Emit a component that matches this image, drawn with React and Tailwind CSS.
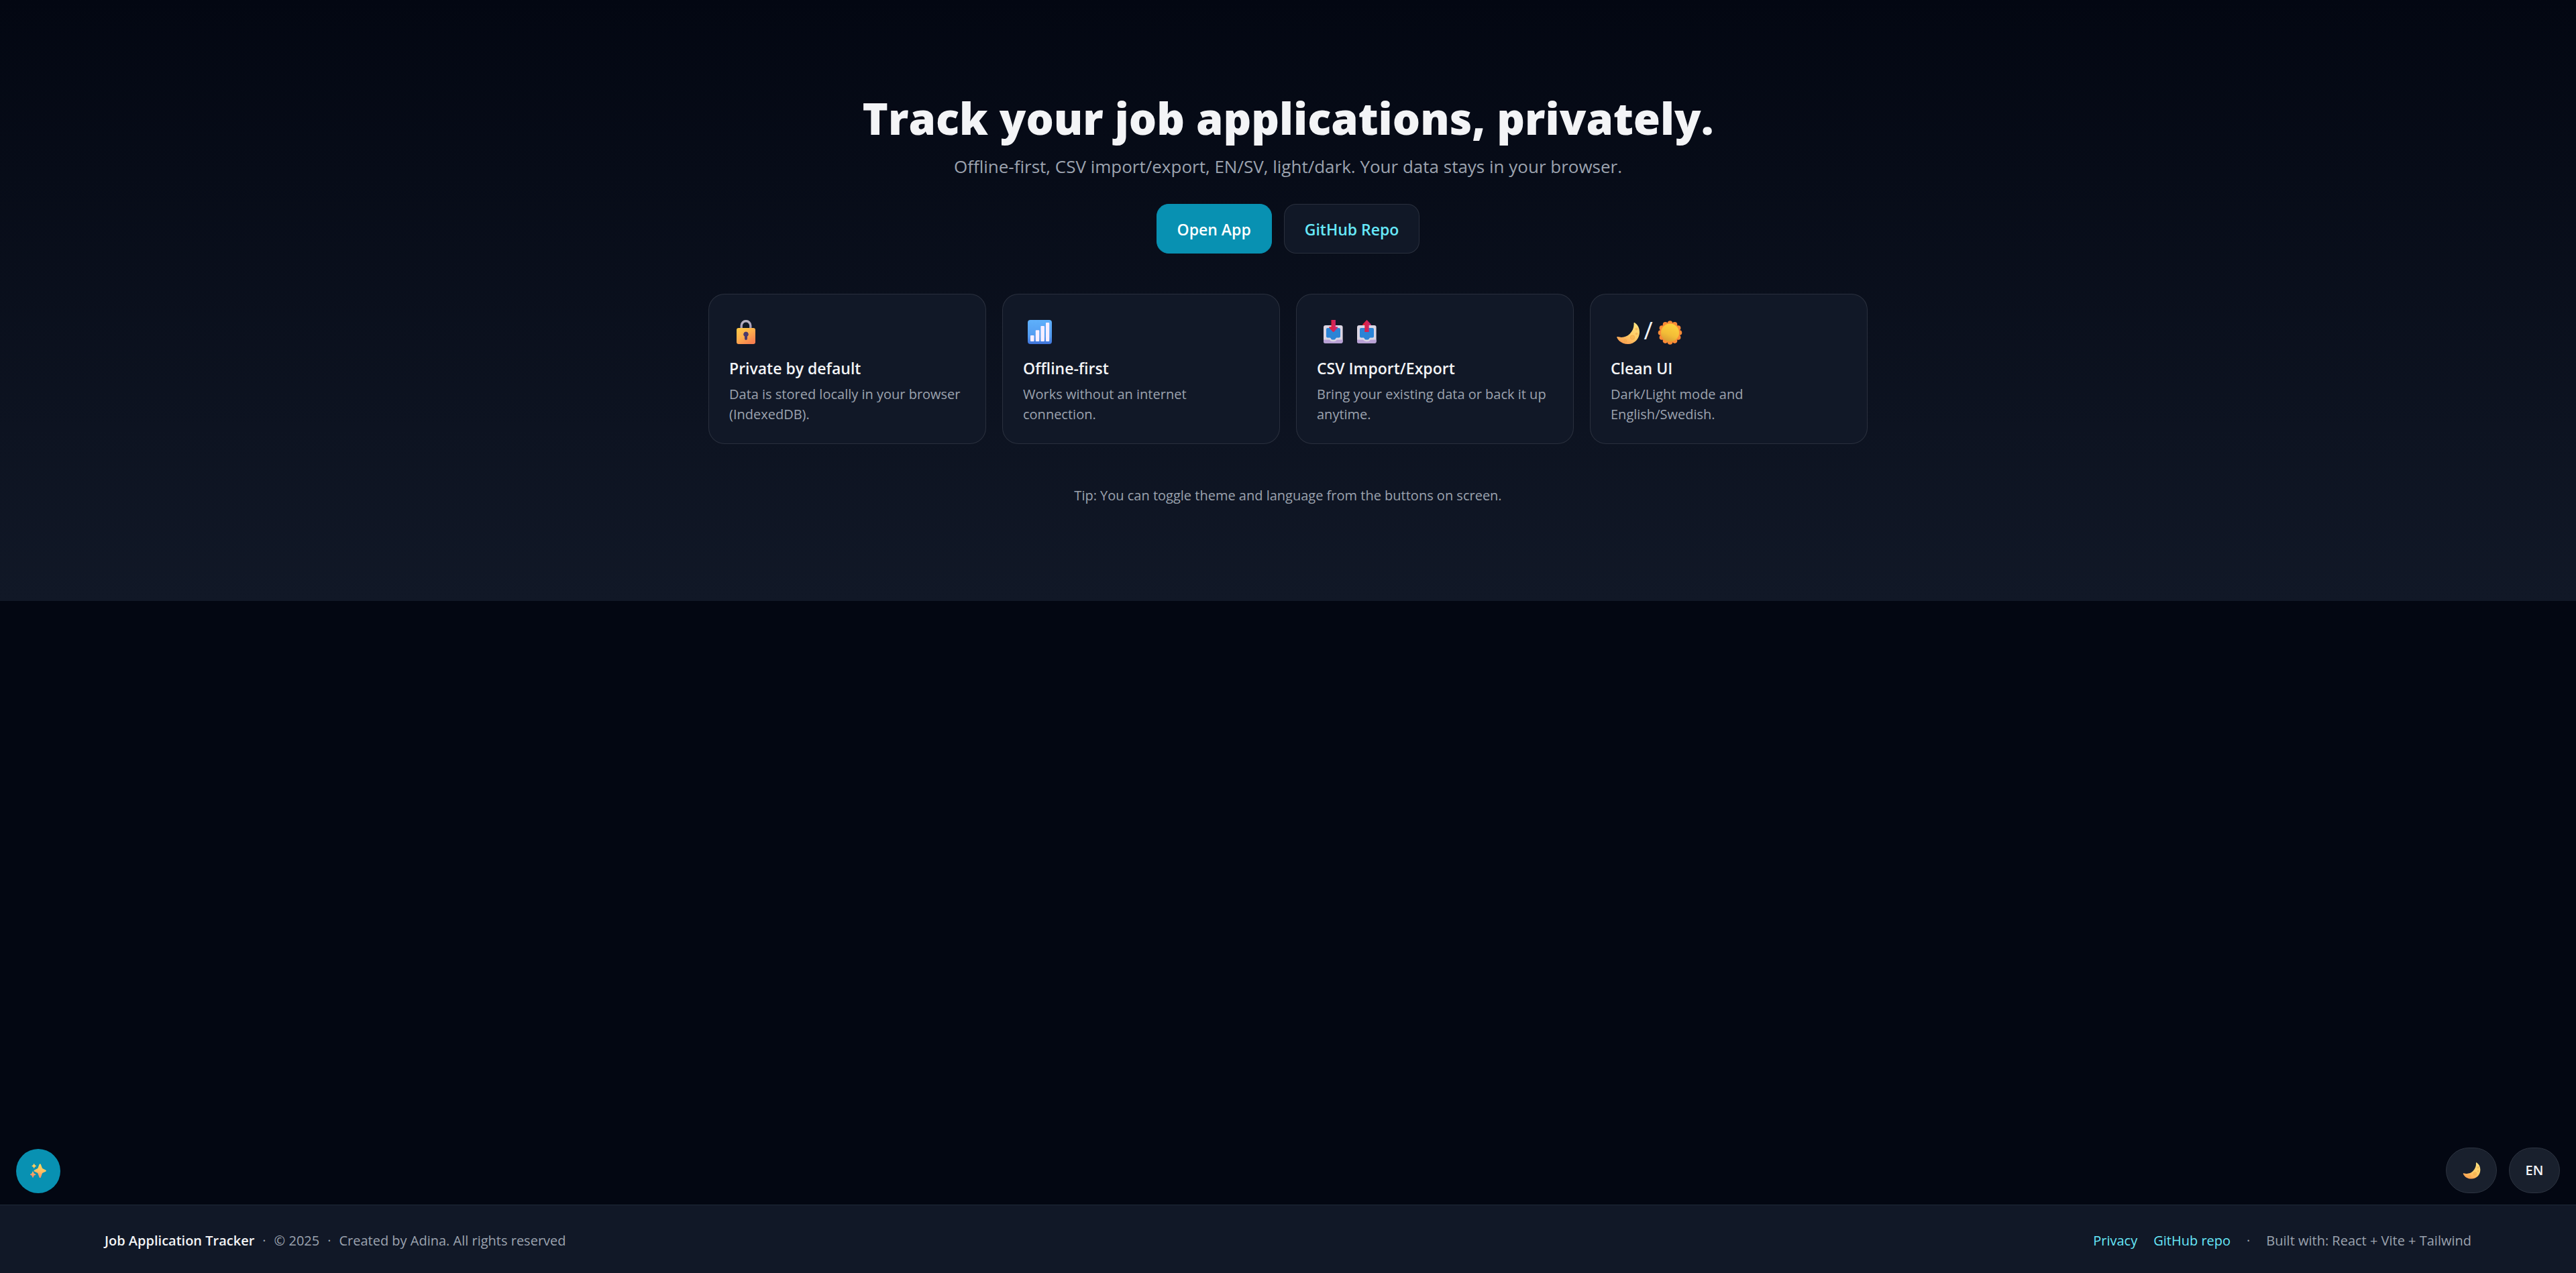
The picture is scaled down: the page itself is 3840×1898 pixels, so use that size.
import { useId } from 'react'

function LockIcon() {
  const id = useId()
  return (
    <svg className="size-12" viewBox="0 0 48 48" aria-hidden="true">
      <defs>
        <linearGradient id={id + 'b'} x1="0" y1="0" x2="0.7" y2="1">
          <stop offset="0" stopColor="#ffcb45" />
          <stop offset="0.5" stopColor="#ffb04d" />
          <stop offset="1" stopColor="#f8804f" />
        </linearGradient>
        <linearGradient id={id + 's'} x1="0" y1="0" x2="0" y2="1">
          <stop offset="0" stopColor="#b9b3c4" />
          <stop offset="1" stopColor="#9d8fb0" />
        </linearGradient>
      </defs>
      <path d="M18.2 22v-5.5a6.8 6.8 0 0 1 13.6 0V22" fill="none" stroke={`url(#${id}s)`} strokeWidth="3.4" />
      <rect x="11" y="20" width="28" height="24" rx="3" fill={`url(#${id}b)`} />
      <path d="M25 25.6a3.8 3.8 0 0 1 2 7V36a2 2 0 0 1-4 0v-3.4a3.8 3.8 0 0 1 2-7Z" fill="#4b3a6b" />
    </svg>
  )
}

function SignalIcon() {
  const id = useId()
  return (
    <svg className="size-12" viewBox="0 0 48 48" aria-hidden="true">
      <defs>
        <linearGradient id={id} x1="0" y1="0" x2="0" y2="1">
          <stop offset="0" stopColor="#5eb0fb" />
          <stop offset="0.7" stopColor="#529af0" />
          <stop offset="1" stopColor="#3f72d8" />
        </linearGradient>
      </defs>
      <rect x="7" y="8" width="36" height="36" rx="4" fill={`url(#${id})`} />
      <g fill="#f7eeff">
        <rect x="11" y="31" width="5.5" height="9" rx="1" />
        <rect x="18.8" y="23.3" width="5.5" height="16.7" rx="1" />
        <rect x="26.4" y="17" width="5.5" height="23" rx="1" />
        <rect x="34" y="12" width="5.2" height="28" rx="1" />
      </g>
    </svg>
  )
}

function TrayIcon({ arrow }) {
  const id = useId()
  return (
    <svg className="size-12" viewBox="0 0 48 48" aria-hidden="true">
      <defs>
        <linearGradient id={id} x1="0" y1="0" x2="1" y2="0">
          <stop offset="0" stopColor="#e61f2e" />
          <stop offset="1" stopColor="#c42a7c" />
        </linearGradient>
      </defs>
      <rect x="10" y="16" width="28.6" height="26.7" rx="3" fill="#dcd6e3" />
      <path d="M10 37.4h8.4c1.4 0 1.6 2.8 6 2.8s4.600-2.800 6-2.800h8.200v3.300a2 2 0 0 1-2 2H12a2 2 0 0 1-2-2Z" fill="#b9a1d6" />
      <path d="M16 20h17a2 2 0 0 1 2 2v10.500a2 2 0 0 1-2 2h-3.500c-1.600 0-1.400 3-3.500 3h-3c-2.100 0-1.900-3-3.500-3H16a2 2 0 0 1-2-2V22a2 2 0 0 1 2-2Z" fill="#2b84d6" />
      {arrow === 'down' ? (
        <path d="M21.500 8h6.400v10.300h2.400c1 0 1.300.8.7 1.500l-5.500 5.900c-.5.500-1.100.5-1.600 0l-5.500-5.900c-.6-.7-.3-1.500.7-1.500h2.400Z" fill={`url(#${id})`} />
      ) : (
        <path d="M21.300 26V15.900h-2.300c-.9 0-1.200-.8-.6-1.400l5.300-5.800c.5-.5 1.100-.5 1.600 0l5.300 5.800c.6.6.3 1.400-.6 1.400h-2.300V26Z" fill={`url(#${id})`} />
      )}
    </svg>
  )
}

function MoonIcon({ className, viewBox = '0 0 48 48' }) {
  const id = useId()
  return (
    <svg className={className} viewBox={viewBox} aria-hidden="true">
      <defs>
        <linearGradient id={id} x1="0.8" y1="0" x2="0.25" y2="1">
          <stop offset="0" stopColor="#ffe27e" />
          <stop offset="0.55" stopColor="#ffcb66" />
          <stop offset="1" stopColor="#ff9d50" />
        </linearGradient>
      </defs>
      <path
        d="M36 12.200C40.300 15 43 20 43 26c0 10.200-7.600 18-17.200 18-7.600 0-13.800-3.700-16.500-9.800-.3-.8.200-1.300 1-1.100 7.100 1.900 13.500.4 18.200-4.300 4.500-4.500 6.600-10.200 6-15.900-.1-.8.700-1.200 1.500-.7Z"
        fill={`url(#${id})`}
      />
      <g fill="#f5b04f" fillOpacity="0.65" stroke="#e89b45" strokeOpacity="0.5" strokeWidth="0.7">
        <circle cx="32.500" cy="34" r="3.300" />
        <circle cx="21.800" cy="39" r="2" />
        <circle cx="38.500" cy="21.500" r="1.600" />
        <circle cx="38.600" cy="28.600" r="1.300" />
      </g>
    </svg>
  )
}

function SunIcon() {
  const id = useId()
  const petals = Array.from({ length: 12 }, (_, i) => {
    const a = (i * Math.PI) / 6
    return [24.5 + 14 * Math.sin(a), 27 - 14 * Math.cos(a)]
  })
  return (
    <svg className="size-12" viewBox="0 0 48 48" aria-hidden="true">
      <defs>
        <linearGradient id={id} x1="0.7" y1="0" x2="0.3" y2="1">
          <stop offset="0" stopColor="#ffd43d" />
          <stop offset="0.6" stopColor="#f3bd37" />
          <stop offset="1" stopColor="#d79c35" />
        </linearGradient>
      </defs>
      <g fill="#fb8b35">
        <circle cx="24.500" cy="27" r="15" />
        {petals.map(([x, y]) => (
          <circle key={`${x}${y}`} cx={x} cy={y} r="3.800" />
        ))}
      </g>
      <circle cx="24.500" cy="27" r="13.500" fill={`url(#${id})`} />
    </svg>
  )
}

function SparklesIcon() {
  const id = useId()
  return (
    <svg className="h-[22px] w-6" viewBox="0 0 24 22" aria-hidden="true">
      <defs>
        <linearGradient id={id} gradientUnits="userSpaceOnUse" x1="14" y1="0" x2="10" y2="22">
          <stop offset="0" stopColor="#ffd85c" />
          <stop offset="0.5" stopColor="#ffc062" />
          <stop offset="1" stopColor="#fb8468" />
        </linearGradient>
      </defs>
      <g fill={`url(#${id})`}>
        <path d="M13.600.9c.4-1 1.800-1 2.200 0l1.900 5.200c.2.700.7 1.200 1.400 1.500l4 1.900c1 .4 1 1.800 0 2.200l-4 1.900c-.7.300-1.200.8-1.400 1.500l-1.900 5.400c-.4 1-1.800 1-2.200 0l-1.900-5.400c-.2-.7-.7-1.200-1.400-1.500l-4-1.900c-1-.4-1-1.800 0-2.200l4-1.900c.7-.3 1.200-.8 1.400-1.500Z" />
        <path d="M5.200.4c.2-.5.800-.5 1 0l.7 1.700 1.800.8c.5.200.5.900 0 1.100l-1.800.8-.7 1.700c-.2.500-.8.500-1 0l-.7-1.700-1.800-.8c-.5-.2-.5-.9 0-1.100l1.800-.8Z" />
        <path d="M3.400 12c.2-.6 1-.6 1.200 0l1 2.600 2.300 1c.6.200.6 1 0 1.200l-2.300 1-1 2.600c-.2.600-1 .6-1.200 0l-1-2.600-2.200-1c-.6-.2-.6-1 0-1.200l2.200-1Z" />
      </g>
    </svg>
  )
}

const features = [
  { title: 'Private by default', text: 'Data is stored locally in your browser (IndexedDB).', icon: <LockIcon /> },
  { title: 'Offline-first', text: 'Works without an internet connection.', icon: <SignalIcon /> },
  {
    title: 'CSV Import/Export',
    text: 'Bring your existing data or back it up anytime.',
    icon: (
      <div className="flex gap-0.5">
        <TrayIcon arrow="down" />
        <TrayIcon arrow="up" />
      </div>
    ),
  },
  {
    title: 'Clean UI',
    text: 'Dark/Light mode and English/Swedish.',
    icon: (
      <div className="flex items-center">
        <MoonIcon className="size-12" />
        <span className="w-4 text-center text-[36px] leading-12">/</span>
        <SunIcon />
      </div>
    ),
  },
]

function Hero() {
  return (
    <section className="bg-linear-to-b/srgb from-[#030712] to-[#111827] px-6 pt-36 pb-[142px] text-center">
      <h1 className="text-[65px] leading-16 font-extrabold">
        Track your job applications, privately.
      </h1>
      <p className="mt-5 text-[26px] leading-10 text-[#9ca3af]">
        Offline-first, CSV import/export, EN/SV, light/dark. Your data stays in your browser.
      </p>
      <div className="mt-9 flex justify-center gap-[18px] text-[23px] leading-9 font-semibold">
        <a href="#app" className="rounded-[18px] border border-[#0891b2] bg-[#0891b2] px-[30px] pt-[19px] pb-[17px] text-white">
          Open App
        </a>
        <a href="#repo" className="rounded-[18px] border border-white/10 bg-[#111827] px-[30px] pt-[19px] pb-[17px] text-[#67e8f9]">
          GitHub Repo
        </a>
      </div>
      <div className="mx-auto mt-15 grid max-w-[1728px] grid-cols-4 gap-6 text-left">
        {features.map((f) => (
          <article key={f.title} className="rounded-3xl border border-white/10 bg-[#111827] px-[30px] pt-[30px] pb-7">
            <div className="h-12">{f.icon}</div>
            <h2 className="mt-[14px] text-[23px] leading-9 font-semibold">{f.title}</h2>
            <p className="mt-1.5 text-[20px] leading-[30px] text-[#9ca3af]">{f.text}</p>
          </article>
        ))}
      </div>
      <p className="mt-[62px] text-[20px] leading-[30px] text-[#9ca3af]">
        Tip: You can toggle theme and language from the buttons on screen.
      </p>
    </section>
  )
}

function Footer() {
  return (
    <footer className="mt-auto flex justify-between border-t border-[#1f2937] bg-[#111827] px-[156px] pt-[38px] pb-[33px] text-[20px] leading-[30px] text-[#9ca3af]">
      <div className="flex gap-3">
        <span className="font-semibold text-[#f3f4f6]">Job Application Tracker</span>
        <span>·</span>
        <span>© 2025</span>
        <span>·</span>
        <span>Created by Adina. All rights reserved</span>
      </div>
      <div className="flex gap-6">
        <a href="#privacy" className="text-[#67e8f9]">Privacy</a>
        <a href="#repo" className="text-[#67e8f9]">GitHub repo</a>
        <span>·</span>
        <span>Built with: React + Vite + Tailwind</span>
      </div>
    </footer>
  )
}

export default function App() {
  return (
    <div className="flex min-h-screen flex-col bg-[#030712] font-['Open_Sans',sans-serif] text-[#f3f4f6]">
      <Hero />
      <Footer />
      <button
        type="button"
        aria-label="Assistant"
        className="fixed bottom-[119px] left-6 flex size-[66px] items-center justify-center rounded-full bg-[#0891b2]"
      >
        <SparklesIcon />
      </button>
      <div className="fixed right-6 bottom-[119px] flex gap-[18px]">
        <button
          type="button"
          aria-label="Toggle theme"
          className="flex h-[68px] w-[76px] items-center justify-center rounded-full border border-[#2d3441] bg-[#19202d]"
        >
          <MoonIcon className="h-[25px] w-[27px]" viewBox="8.500 11.500 35 33" />
        </button>
        <button
          type="button"
          className="h-[68px] w-[76px] rounded-full border border-[#2d3441] bg-[#19202d] text-[20px] leading-[30px] font-semibold"
        >
          EN
        </button>
      </div>
    </div>
  )
}
